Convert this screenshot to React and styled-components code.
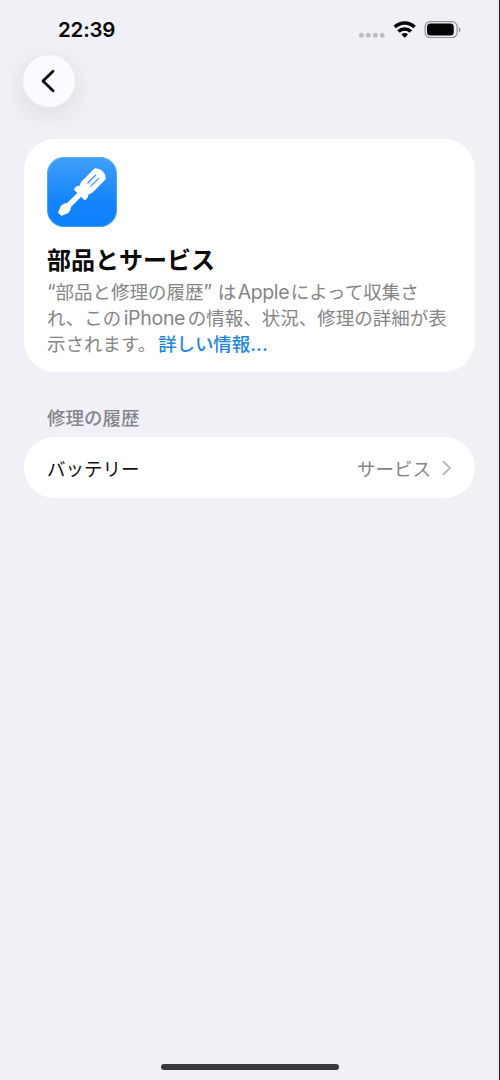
import React from 'react'
import styled, { createGlobalStyle } from "styled-components";

const GlobalStyle = createGlobalStyle`
	* {
		box-sizing: border-box;
	}
	body {
		margin: 0;
		background: #f1f0f6;
		font-family: Inter, "Noto Sans CJK JP", sans-serif;
	}
`;

const Screen = styled.div`
	display: flex;
	flex-direction: column;
	width: 500px;
	height: 1080px;
	padding: 0 24px;
	background: #f1f0f6;
	border-right: 1px solid #1c1c1e;
`;

const StatusBar = styled.header`
	display: flex;
	align-items: center;
	justify-content: space-between;
	height: 55px;
	padding: 5px 14px 0 34px;
`;

const Clock = styled.span`
	font-size: 20.5px;
	font-weight: 600;
	line-height: 24px;
	letter-spacing: -0.2px;
	color: #08080a;
`;

const BackButton = styled.button`
	display: flex;
	align-items: center;
	justify-content: center;
	width: 52px;
	height: 52px;
	margin-left: -1px;
	padding: 0 3px 0 0;
	border: 0;
	border-radius: 50%;
	background: #fbfaff;
	box-shadow: 0 6px 28px rgba(40, 40, 60, 0.1);
`;

const Card = styled.section`
	width: 451px;
	height: 233px;
	margin-top: 32px;
	padding: 18px 23px 0;
	border-radius: 31px;
	background: #fff;
`;

const AppIcon = styled.div`
	width: 70px;
	height: 70px;
	border-radius: 17px;
	background: linear-gradient(#429ff8, #1284fc 65%, #0f80fd);
	box-shadow: inset 0 0 0 1px rgba(120, 200, 255, 0.45);
`;

const Title = styled.h1`
	margin: 17px 0 0;
	font-size: 24px;
	font-weight: 700;
	line-height: 34px;
	color: #0a0a0a;
`;

const Description = styled.div`
	padding-top: 1px;
`;

const Line = styled.div`
	height: 26px;
	font-size: 18.5px;
	line-height: 26px;
	white-space: nowrap;
	color: #858585;
`;

const Latin = styled.span`
	margin: 0 ${props => props.$gap || 0}px;
	font-size: 19.5px;
	letter-spacing: ${props => props.$track || 0}px;
`;

const Link = styled.a`
	margin-left: 2px;
	letter-spacing: -0.1px;
	color: #2488dc;
	font-weight: 500;
`;

const SectionLabel = styled.h2`
	margin: 33px 0 0;
	padding-left: 23px;
	height: 32px;
	font-size: 18.5px;
	font-weight: 500;
	line-height: 27px;
	color: #85858b;
`;

const Row = styled.div`
	display: flex;
	align-items: center;
	width: 451px;
	height: 61px;
	padding: 0 23px;
	border-radius: 31px;
	background: #fff;
	font-size: 18.5px;
	color: #111;
`;

const Value = styled.span`
	margin-left: auto;
	margin-right: 11px;
	color: #858585;
`;

const HomeIndicator = styled.div`
	width: 178px;
	height: 6px;
	margin: auto auto 10px 137px;
	border-radius: 3px;
	background: #38383c;
`;

const StatusIcons = () => (
    <svg width="103" height="22" viewBox="358 19 103 22">
        <g fill="#bdbdc3">
            <rect x="359" y="33" width="4.6" height="4.6" rx="1.5" />
            <rect x="366" y="33" width="4.6" height="4.6" rx="1.5" />
            <rect x="373" y="33" width="4.6" height="4.6" rx="1.5" />
            <rect x="380" y="33" width="4.6" height="4.6" rx="1.5" />
        </g>
        <g fill="none" stroke="#050505" strokeWidth="3.5">
            <path d="M394.8 27.1a14 14 0 0 1 19.8 0" />
            <path d="M398.5 31.6a8.8 8.8 0 0 1 12.4 0" />
        </g>
        <path d="M401.4 34.4a4.7 4.7 0 0 1 6.6 0l-3.3 3.3z" fill="#050505" />
        <rect x="425.1" y="21.7" width="32" height="15.8" rx="5" fill="none" stroke="#929297" strokeWidth="1.2" />
        <rect x="427" y="23.6" width="26.8" height="12" rx="3.5" fill="#050505" />
        <path d="M458.8 27.2c2.2.6 2.2 4.4 0 5z" fill="#929297" />
    </svg>
)

const Screwdriver = () => (
    <svg width="70" height="70" viewBox="0 0 70 70">
        <g transform="translate(12.7 57.3) rotate(-45)" fill="#fff">
            <path d="M0-1.8Q0-2.4 1-2.8L7-5.2Q10.5-5.2 13.5-2.7H29V2.7H13.5Q10.5 5.2 7 5.2L1 2.8Q0 2.4 0 1.8Z" />
            <path d="M27.5-6.5Q27.5-8 29-8H31Q32.2-8 33-7Q34.5-5.6 36-6.8Q37.2-7.8 39-7.8H55.5Q57.5-7.8 58.5-6.4L60-4.2Q60.6-3.2 60.6-2V2Q60.6 3.2 60 4.2L58.5 6.4Q57.5 7.8 55.5 7.8H39Q37.2 7.8 36 6.8Q34.5 5.6 33 7Q32.2 8 31 8H29Q27.5 8 27.5 6.5Z" />
            <path d="M42-2.2H53M42 2.2H53" stroke="#3e94f5" strokeWidth="1.3" strokeLinecap="round" />
        </g>
    </svg>
)

export default function App() {
    return (
        <Screen>
            <GlobalStyle />
            <StatusBar>
                <Clock>22:39</Clock>
                <StatusIcons />
            </StatusBar>
            <BackButton type="button" aria-label="戻る">
                <svg width="16" height="24" viewBox="0 0 16 24">
                    <path d="M13 2.3L3 12L13 21.7" fill="none" stroke="#080808" strokeWidth="2.8" strokeLinecap="round" strokeLinejoin="round" />
                </svg>
            </BackButton>

            <Card>
                <AppIcon>
                    <Screwdriver />
                </AppIcon>
                <Title>部品とサービス</Title>
                <Description>
                    <Line><Latin>“</Latin>部品と修理の履歴<Latin>” </Latin>は<Latin $gap={1.5} $track={-0.4}>Apple</Latin>によって収集さ</Line>
                    <Line>れ、この<Latin $gap={2.5} $track={-0.3}>iPhone</Latin>の情報、状況、修理の詳細が表</Line>
                    <Line>示されます。<Link>詳しい情報<Latin>...</Latin></Link></Line>
                </Description>
            </Card>

            <SectionLabel>修理の履歴</SectionLabel>
            <Row>
                <span>バッテリー</span>
                <Value>サービス</Value>
                <svg width="10" height="16" viewBox="0 0 10 16">
                    <path d="M1.5 1.8L8 8L1.5 14.2" fill="none" stroke="#bcbcc0" strokeWidth="2" strokeLinecap="round" strokeLinejoin="round" />
                </svg>
            </Row>
            <HomeIndicator />
        </Screen>
    )
}
